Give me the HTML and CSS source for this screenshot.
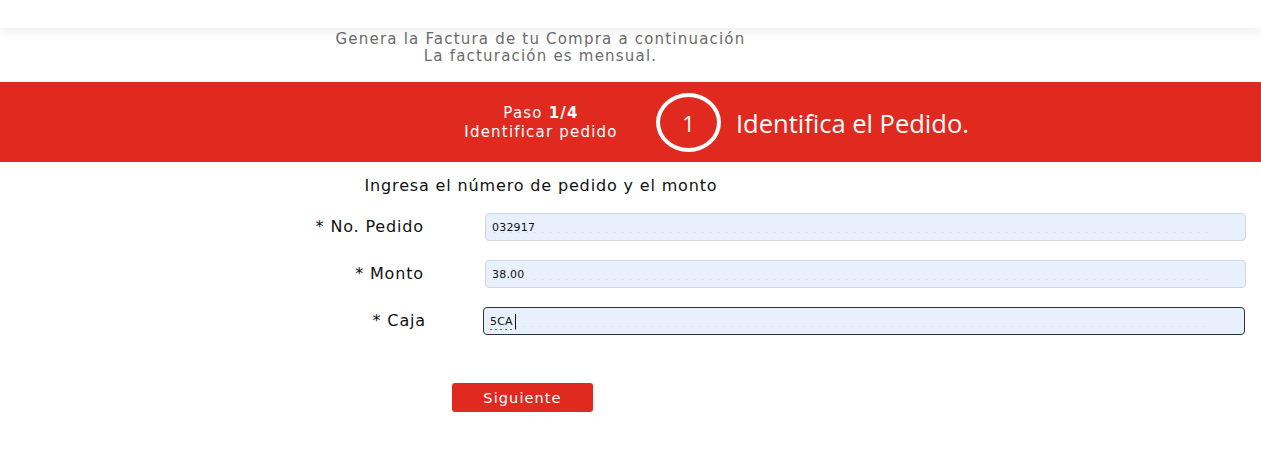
FILE: index.html
```html
<!DOCTYPE html>
<html lang="es">
<head>
<meta charset="utf-8">
<title>Facturación</title>
<link rel="stylesheet" href="styles.css">
</head>
<body>
<header class="topbar"></header>
<div class="intro">
  <p>Genera la Factura de tu Compra a continuación</p>
  <p>La facturación es mensual.</p>
</div>
<section class="band">
  <div class="band-inner">
    <div class="step-info">
      <div>Paso <b>1/4</b></div>
      <div>Identificar pedido</div>
    </div>
    <div class="step-circle">1</div>
    <div class="step-title">Identifica el Pedido.</div>
  </div>
</section>
<main class="form">
  <h2 class="form-title">Ingresa el número de pedido y el monto</h2>
  <div class="row">
    <label class="label" for="pedido">* No. Pedido</label>
    <input class="field" id="pedido" type="text" value="032917">
  </div>
  <div class="row">
    <label class="label" for="monto">* Monto</label>
    <input class="field" id="monto" type="text" value="38.00">
  </div>
  <div class="row">
    <label class="label label-caja" for="caja">* Caja</label>
    <input class="field field-focus" id="caja" type="text" value="5CA">
  </div>
  <div class="actions">
    <button class="btn" type="button">Siguiente</button>
  </div>
</main>
</body>
</html>
```
FILE: styles.css
```css
* { box-sizing: border-box; }
html, body { margin: 0; padding: 0; background: #fff; }
body {
  font-family: "DejaVu Sans", "Noto Sans", sans-serif;
  color: #111;
  width: 1261px;
  height: 451px;
  overflow: hidden;
}
.topbar {
  height: 28px;
  background: #fff;
  box-shadow: 0 4px 12px rgba(0, 0, 0, 0.07);
  position: relative;
  z-index: 1;
}
.intro {
  width: 1081px;
  text-align: center;
  color: #6b6b6b;
  font-size: 15px;
  letter-spacing: 1.2px;
  line-height: 17px;
  padding-top: 3px;
  height: 54px;
}
.intro p { margin: 0; }
.band {
  background: #e02a20;
  height: 80px;
  color: #fff;
}
.band-inner {
  display: flex;
  align-items: center;
  height: 80px;
  padding-left: 458px;
}
.step-info {
  width: 166px;
  text-align: center;
  font-size: 15px;
  letter-spacing: 1.2px;
  line-height: 19px;
  margin-top: 1px;
}
.step-info b { font-weight: 600; }
.step-circle {
  width: 65px;
  height: 59px;
  margin-left: 32px;
  border: 4px solid #fff;
  border-radius: 50%;
  display: flex;
  align-items: center;
  justify-content: center;
  font-family: "Open Sans", sans-serif;
  font-size: 22px;
  margin-top: 1px;
}
.step-title {
  margin-left: 15px;
  font-family: "Open Sans", sans-serif;
  font-size: 25.5px;
  margin-top: 1px;
}
.form { padding-top: 14px; }
.form-title {
  margin: 0 0 17px 0;
  width: 1082px;
  text-align: center;
  font-weight: normal;
  font-size: 16px;
  letter-spacing: 0.85px;
  line-height: 20px;
}
.row {
  display: flex;
  align-items: center;
  height: 28px;
  margin-bottom: 19px;
}
.label {
  width: 424px;
  text-align: right;
  font-size: 16px;
  letter-spacing: 0.85px;
  flex: none;
  margin-top: -2px;
}
.label-caja { width: 426px; }
.field {
  margin-left: 61px;
  width: 761px;
  height: 28px;
  border: 1px solid #d3d6dc;
  border-radius: 4px;
  background-color: #e8f0fe;
  background-image: repeating-linear-gradient(to right, #cfd5df 0 1px, transparent 1px 8px);
  background-size: calc(100% - 40px) 1px;
  background-position: 8px 18px;
  background-repeat: no-repeat;
  font-family: "DejaVu Sans", sans-serif;
  font-size: 11px;
  letter-spacing: 0.2px;
  color: #111;
  padding: 0 6px;
  outline: none;
}
.field-focus {
  margin-left: 57px;
  width: 762px;
  border: 1px solid #2a323c;
  border-radius: 4px;
  background-image:
    linear-gradient(#111, #111),
    repeating-linear-gradient(to right, #e23b3b 0 2px, transparent 2px 5px),
    repeating-linear-gradient(to right, #cfd5df 0 1px, transparent 1px 8px);
  background-size: 1px 15px, 26px 1px, calc(100% - 40px) 1px;
  background-position: 31px 6px, 6px 21px, 8px 18px;
  background-repeat: no-repeat;
}
.actions {
  padding-left: 452px;
  padding-top: 29px;
}
.btn {
  width: 141px;
  height: 29px;
  background: #e02a20;
  color: #fff;
  border: none;
  border-radius: 3px;
  font-family: "DejaVu Sans", sans-serif;
  font-size: 14.5px;
  letter-spacing: 1.1px;
  padding: 0;
}
```
